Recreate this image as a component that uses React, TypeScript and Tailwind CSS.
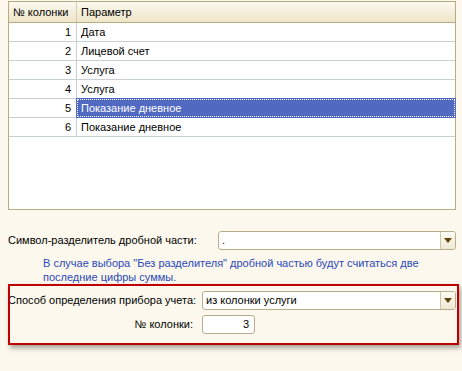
import React from 'react';

const rows = [
  { n: 1, p: 'Дата' },
  { n: 2, p: 'Лицевой счет' },
  { n: 3, p: 'Услуга' },
  { n: 4, p: 'Услуга' },
  { n: 5, p: 'Показание дневное', selected: true },
  { n: 6, p: 'Показание дневное' },
];

function Arrow() {
  return (
    <svg width="8" height="5" viewBox="0 0 8 5">
      <path d="M0 0 H8 L4 5 Z" fill="#5e450c" />
    </svg>
  );
}

function Combo({ value, className }: { value: string; className: string }) {
  return (
    <div
      className={`flex h-[19px] items-stretch rounded-[3px] border border-[#b9ae8c] bg-white ${className}`}
    >
      <div className="flex flex-1 items-center pl-[3px] text-[11px] leading-none">{value}</div>
      <div className="flex w-[15px] items-center justify-center rounded-r-[3px] border-l border-[#cfc6a8] bg-gradient-to-b from-[#fdfcf6] to-[#efe9d3]">
        <Arrow />
      </div>
    </div>
  );
}

export default function App() {
  return (
    <div
      className="relative h-[371px] w-[462px] overflow-hidden bg-[#fcf8ed] text-[11px] text-black"
      style={{ fontFamily: '"Liberation Sans", Arial, sans-serif' }}
    >
      {/* Table */}
      <div className="ml-[8px] mt-[1px] flex h-[209px] w-[448px] flex-col border border-[#b7ab84] bg-white">
        <div className="flex h-[21px] border-b border-[#b7ab84] bg-gradient-to-b from-[#fbf9f0] to-[#eee6c8]">
          <div className="flex w-[68px] items-center border-r border-[#d7cfae] pl-[4px]">№ колонки</div>
          <div className="flex flex-1 items-center pl-[4px]">Параметр</div>
        </div>
        {rows.map((r) => (
          <div key={r.n} className="flex h-[19px] border-b border-[#c9d0d3]">
            <div className="flex w-[68px] items-center justify-end border-r border-[#c9d0d3] pr-[5px]">
              {r.n}
            </div>
            {r.selected ? (
              <div className="flex flex-1 items-center border border-dotted border-white bg-[#5169c1] pl-[3px] text-white outline outline-1 outline-[#5169c1]">
                {r.p}
              </div>
            ) : (
              <div className="flex flex-1 items-center pl-[4px]">{r.p}</div>
            )}
          </div>
        ))}
      </div>

      {/* Separator symbol */}
      <div className="mt-[21px] flex items-center pl-[8px]">
        <div className="w-[210px]">Символ-разделитель дробной части:</div>
        <Combo value="." className="w-[238px]" />
      </div>
      <div className="mt-[6px] pl-[43px] leading-[14px] text-[#2a48b9]">
        В случае выбора "Без разделителя" дробной частью будут считаться две
        <br />
        последние цифры суммы.
      </div>

      {/* Meter section */}
      <div className="mt-[7px] flex flex-col gap-[5px] pl-[8px]">
        <div className="flex items-center">
          <div className="w-[194px]">Способ определения прибора учета:</div>
          <Combo value="из колонки услуги" className="w-[254px]" />
        </div>
        <div className="flex items-center">
          <div className="w-[185px] text-right">№ колонки:</div>
          <div className="ml-[9px] flex h-[19px] w-[53px] items-center justify-end rounded-[3px] border border-[#b9ae8c] bg-white pr-[5px]">
            3
          </div>
        </div>
      </div>

      {/* Annotation frame */}
      <div className="pointer-events-none absolute left-[8px] top-[284px] h-[61px] w-[451px] border-2 border-[#bf0000] shadow-[2px_3px_5px_rgba(0,0,0,0.35)]" />
    </div>
  );
}
